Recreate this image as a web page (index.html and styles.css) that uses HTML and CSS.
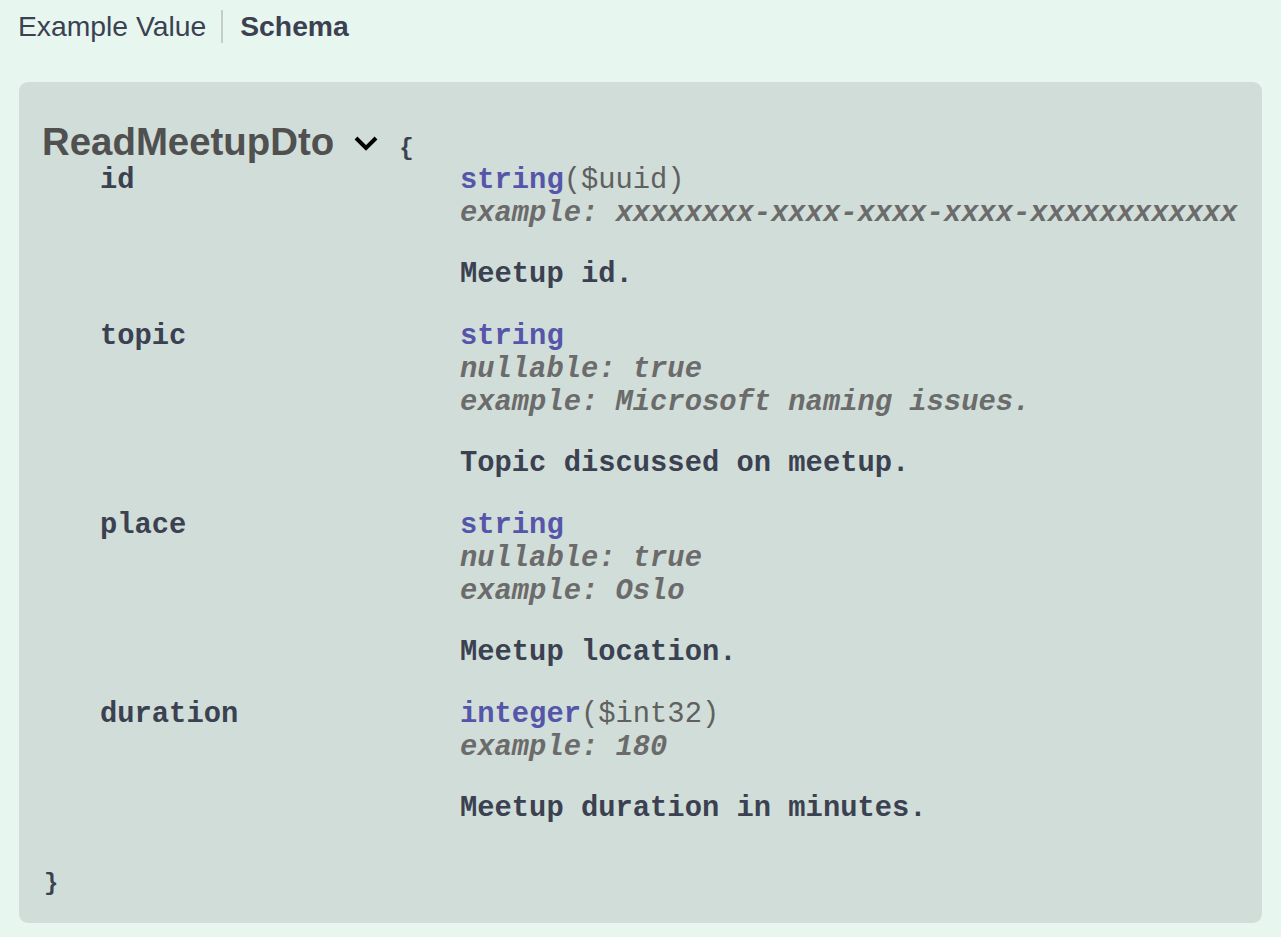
FILE: index.html
```html
<!DOCTYPE html>
<html>
<head>
<meta charset="utf-8">
<link rel="stylesheet" href="styles.css">
</head>
<body>
<div class="tabs">
  <span class="tab">Example Value</span>
  <span class="divider"></span>
  <span class="tab active">Schema</span>
</div>
<div class="model-box">
  <div class="model-head">
    <span class="model-title">ReadMeetupDto</span>
    <svg class="chevron" width="24" height="16" viewBox="0 0 24 16"><polyline points="2,3 12,13 22,3" fill="none" stroke="#000" stroke-width="4"/></svg>
    <span class="brace">{</span>
  </div>
  <div class="prop">
    <div class="name">id</div>
    <div class="info">
      <div class="line"><span class="type">string</span><span class="fmt">($uuid)</span></div>
      <div class="line ex">example: xxxxxxxx-xxxx-xxxx-xxxx-xxxxxxxxxxxx</div>
      <div class="line desc">Meetup id.</div>
    </div>
  </div>
  <div class="prop">
    <div class="name">topic</div>
    <div class="info">
      <div class="line"><span class="type">string</span></div>
      <div class="line ex">nullable: true</div>
      <div class="line ex">example: Microsoft naming issues.</div>
      <div class="line desc">Topic discussed on meetup.</div>
    </div>
  </div>
  <div class="prop">
    <div class="name">place</div>
    <div class="info">
      <div class="line"><span class="type">string</span></div>
      <div class="line ex">nullable: true</div>
      <div class="line ex">example: Oslo</div>
      <div class="line desc">Meetup location.</div>
    </div>
  </div>
  <div class="prop">
    <div class="name">duration</div>
    <div class="info">
      <div class="line"><span class="type">integer</span><span class="fmt">($int32)</span></div>
      <div class="line ex">example: 180</div>
      <div class="line desc">Meetup duration in minutes.</div>
    </div>
  </div>
  <div class="brace-close">}</div>
</div>
</body>
</html>
```
FILE: styles.css
```css
html, body {
  margin: 0;
  padding: 0;
  background: #e8f6f0;
  width: 1281px;
  height: 937px;
  overflow: hidden;
}
.tabs {
  display: flex;
  align-items: center;
  height: 33px;
  margin: 10px 0 0 18px;
  font-family: "Liberation Sans", Arial, sans-serif;
  font-size: 28.3px;
  color: #3b4151;
}
.tab.active { font-weight: bold; }
.divider {
  width: 2px;
  height: 33px;
  background: #c4cdc9;
  margin: 0 17px 0 15px;
}
.model-box {
  margin: 39px 0 0 19px;
  width: 1243px;
  height: 841px;
  box-sizing: border-box;
  background: #d1ddd8;
  border-radius: 9px;
  padding: 38px 0 0 23px;
}
.model-head {
  display: flex;
  align-items: baseline;
  height: 44px;
  line-height: 44px;
}
.model-title {
  font-family: "Liberation Sans", Arial, sans-serif;
  font-size: 38.4px;
  font-weight: bold;
  color: #505050;
}
.chevron {
  margin-left: 20px;
  align-self: center;
  margin-top: 2px;
}
.brace {
  font-family: "Liberation Mono", "Courier New", monospace;
  font-weight: bold;
  font-size: 24px;
  color: #3b4151;
  margin-left: 21px;
}
.prop {
  display: flex;
  font-family: "Liberation Mono", "Courier New", monospace;
  font-size: 28.8px;
  line-height: 33px;
  padding-bottom: 29px;
}
.name {
  width: 360px;
  padding-left: 58px;
  font-weight: bold;
  color: #3b4151;
}
.info { display: flex; flex-direction: column; }
.type { color: #5555aa; font-weight: bold; }
.fmt { color: #606060; }
.ex { color: #6b6b6b; font-style: italic; font-weight: bold; }
.desc { color: #3b4151; font-weight: bold; margin-top: 28px; }
.brace-close {
  font-family: "Liberation Mono", "Courier New", monospace;
  font-weight: bold;
  font-size: 24px;
  color: #3b4151;
  margin-top: 16px;
  padding-left: 2px;
}
```
